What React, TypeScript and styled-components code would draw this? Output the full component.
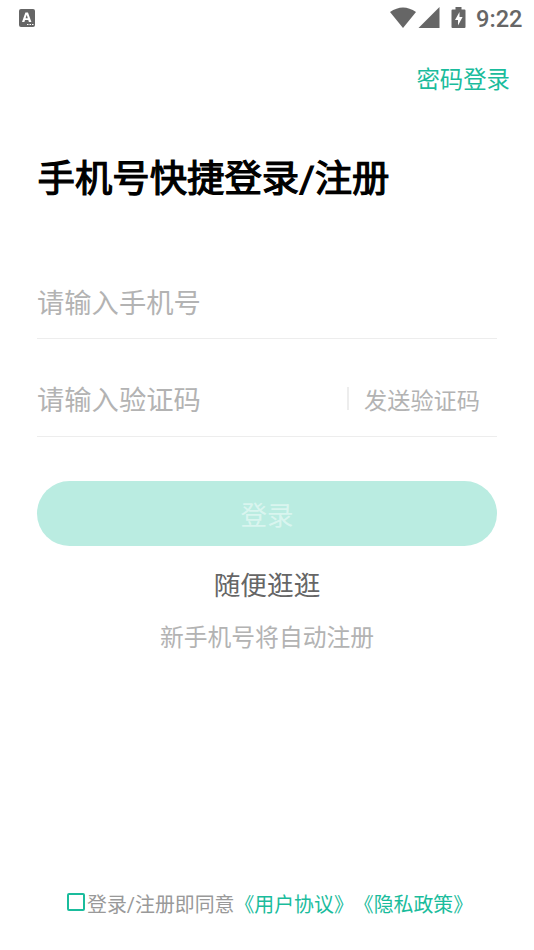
import React from 'react';
import styled, { createGlobalStyle } from 'styled-components';

const Global = createGlobalStyle`
  * { box-sizing: border-box; }
  body { margin: 0; background: #fff; font-family: Roboto, "Noto Sans CJK SC", sans-serif; }
  button, input { font: inherit; border: 0; background: none; padding: 0; margin: 0; outline: none; }
`;
const Screen = styled.div`
  height: 950px; width: 534px; display: flex; flex-direction: column; overflow: hidden;
`;
const StatusBar = styled.header`
  height: 36px; display: flex; justify-content: space-between; padding: 0 12px 0 18px; color: #666;
`;
const StatusIcons = styled.div`
  display: flex; align-items: flex-start;
`;
const Clock = styled.span`
  width: 46px; font-size: 23.6px; font-weight: 500; line-height: 38px; margin-left: 8px; white-space: nowrap;
`;
const TopBar = styled.nav`
  display: flex; justify-content: flex-end; height: 86px; padding: 27px 24px 0 0;
`;
const ModeLink = styled.button`
  height: 34px; line-height: 34px; font-size: 23.4px; color: #1abc9c; white-space: nowrap;
`;
const Form = styled.main`
  padding: 0 37px; flex: 1; display: flex; flex-direction: column;
`;
const Title = styled.h1`
  margin: 27px 0 0; height: 61px; line-height: 60px; font-size: 37.4px; font-weight: 400; color: #000; white-space: nowrap;
  -webkit-text-stroke: 1.2px #000; padding-left: .5px;
`;
const Field = styled.label<{ $first?: boolean }>`
  display: flex; align-items: center; border-bottom: 1px solid #ededed;
  height: ${p => (p.$first ? 75 : 98)}px; margin-top: ${p => (p.$first ? 54 : 0)}px; padding-top: ${p => (p.$first ? 5 : 26)}px;
`;
const Input = styled.input`
  flex: 1; min-width: 0; height: 46px; font-size: 27.3px; color: #333;
  &::placeholder { color: #b3b3b3; opacity: 1; }
`;
const SendCode = styled.button`
  width: 150px; height: 23px; line-height: 29px; margin-top: -4px; padding-right: 2px; border-left: 2px solid #ededed; font-size: 23.2px; color: #b3b3b3; white-space: nowrap;
`;
const Submit = styled.button`
  margin-top: 44px; height: 65px; border-radius: 33px; background: #baece1; color: #d9f5ef; font-size: 26.5px; line-height: 65px; padding-top: 2px;
`;
const Browse = styled.button`
  margin-top: 20px; height: 40px; line-height: 40px; font-size: 26.7px; color: #666;
`;
const Hint = styled.p`
  margin: 14px 0 0; height: 36px; line-height: 36px; font-size: 23.8px; color: #b3b3b3; text-align: center;
`;
const Agreement = styled.footer`
  height: 66px; padding: 0 0 0 67px; display: flex; align-items: flex-start; font-size: 19.9px; line-height: 44px; color: #999; white-space: nowrap;
`;
const Checkbox = styled.span`
  width: 18px; height: 18px; border: 2px solid #1abc9c; border-radius: 2px; margin: 9px 2px 0 0;
`;
const Policy = styled.span`
  color: #1abc9c;
`;

export default function App() {
  return (
    <Screen>
      <Global />
      <StatusBar>
        <svg width="18" height="36" viewBox="0 0 18 36">
          <rect x="1" y="9" width="16" height="18" rx="2" fill="#666" />
          <path fillRule="evenodd" fill="#fff" d="M4 22 7.4 12.5h2.6l3.4 9.5h-2.5l-.6-1.9H7l-.6 1.9ZM7.6 18.3h2.2l-1.1-3.5Z" />
          <path d="M9 24.5h1.5M11.5 24.5H13M14 24.5h1.5" stroke="#fff" strokeWidth="1" />
        </svg>
        <StatusIcons>
          <svg width="78" height="36" viewBox="0 0 78 36" fill="#666">
            <path d="M0 12 Q13 3 26 12 L13 28Z" />
            <path d="M49.5 7V28H28.5Z" />
            <path fillRule="evenodd" d="M65.5 7h6v2.5h3q1 0 1 1V27q0 1-1 1h-12q-1 0-1-1V10.5q0-1 1-1h3ZM69.5 12l-4.5 8h3v5.5l4.6-8.5h-3.1Z" />
          </svg>
          <Clock>9:22</Clock>
        </StatusIcons>
      </StatusBar>
      <TopBar><ModeLink>密码登录</ModeLink></TopBar>
      <Form>
        <Title>手机号快捷登录/注册</Title>
        <Field $first><Input placeholder="请输入手机号" /></Field>
        <Field><Input placeholder="请输入验证码" /><SendCode>发送验证码</SendCode></Field>
        <Submit>登录</Submit>
        <Browse>随便逛逛</Browse>
        <Hint>新手机号将自动注册</Hint>
      </Form>
      <Agreement>
        <Checkbox role="checkbox" aria-checked="false" />
        <span>登录/注册即同意</span><Policy>《用户协议》</Policy><Policy>《隐私政策》</Policy>
      </Agreement>
    </Screen>
  );
}
